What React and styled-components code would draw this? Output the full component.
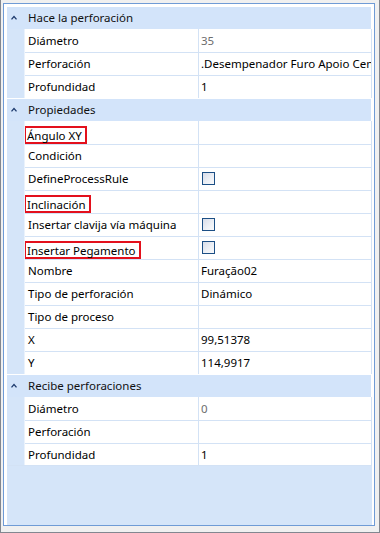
import React from "react";
import styled, { createGlobalStyle } from "styled-components";

const Global = createGlobalStyle`
  html, body { margin: 0; padding: 0; background: #f0f0f0; }
  body { font-family: "Noto Sans", "Open Sans", "Liberation Sans", sans-serif; font-size: 11.5px; }
  * { box-sizing: border-box; }
`;

const Window = styled.div`
  width: 380px;
  height: 533px;
  background: #f0f0f0;
  border-left: 1px solid #828790;
  border-right: 1px solid #828790;
  border-bottom: 1px solid #828790;
  padding: 3px 4px 6px 2px;
  display: flex;
`;

const Panel = styled.div`
  flex: 1;
  border: 1px solid #6f9bd6;
  background: #d5e5f9;
  display: flex;
`;

const Inner = styled.div`
  flex: 1;
  border-left: 3px solid #ffffff;
  border-top: 2px solid #ffffff;
  border-right: 2px solid #ffffff;
  display: flex;
  flex-direction: column;
`;

const Header = styled.div`
  height: 23px;
  display: flex;
  align-items: center;
  border-top: 1px solid #ffffff;
  border-right: 1px solid #ffffff;
  background: #d3e4fa;
  padding: 0 0 1px 4px;
  color: #111;
`;

const Caret = styled.svg`
  width: 6px;
  height: 5px;
  margin-right: 11px;
  flex: none;
`;

const Row = styled.div`
  height: 23px;
  display: grid;
  grid-template-columns: 17px 1px 173px 1px 172px 1px;
  border-bottom: ${(p) => (p.$last ? "1px solid #d3e2f5" : "0")};
`;

const Gutter = styled.div`
  background: #d5e5f9;
`;

const VLine = styled.div`
  background: ${(p) => p.$c || "#d3e2f5"};
`;

const Cell = styled.div`
  background: #ffffff;
  border-top: 1px solid ${(p) => (p.$first ? "#ffffff" : "#d3e2f5")};
  display: flex;
  align-items: center;
  padding: 0 0 1px ${(p) => p.$pad}px;
  overflow: hidden;
  white-space: nowrap;
  color: ${(p) => (p.$muted ? "#6d6d6d" : "#000")};
`;

const Label = styled.span`
  display: inline-block;
  ${(p) =>
    p.$hl
      ? `border: 2px solid #e3101c; padding: 0 3px 0 1px; margin-left: -4px; margin-top: 4px; margin-bottom: -1px; line-height: 15px; align-self: stretch; display: flex; align-items: center;`
      : ``}
`;

const Check = styled.span`
  width: 13px;
  height: 13px;
  margin-left: 1px;
  border: 1px solid #1c4f85;
  background: linear-gradient(135deg, #d8dde9 0%, #eef1f6 60%, #f8f9fb 100%);
`;

const Spacer = styled.div`
  flex: 1;
`;

const sections = [
  {
    title: "Hace la perforación",
    rows: [
      { n: "Diámetro", v: "35", muted: true },
      { n: "Perforación", v: ".Desempenador Furo Apoio Central" },
      { n: "Profundidad", v: "1" },
    ],
  },
  {
    title: "Propiedades",
    rows: [
      { n: "Ángulo XY", v: "", hl: true },
      { n: "Condición", v: "" },
      { n: "DefineProcessRule", check: true },
      { n: "Inclinación", v: "", hl: true },
      { n: "Insertar clavija vía máquina", check: true },
      { n: "Insertar Pegamento", check: true, hl: true },
      { n: "Nombre", v: "Furação02" },
      { n: "Tipo de perforación", v: "Dinámico" },
      { n: "Tipo de proceso", v: "" },
      { n: "X", v: "99,51378" },
      { n: "Y", v: "114,9917" },
    ],
  },
  {
    title: "Recibe perforaciones",
    rows: [
      { n: "Diámetro", v: "0", muted: true },
      { n: "Perforación", v: "" },
      { n: "Profundidad", v: "1" },
    ],
  },
];

export default function App() {
  return (
    <>
      <Global />
      <Window>
        <Panel>
          <Inner>
            {sections.map((s, si) => (
              <React.Fragment key={s.title}>
                <Header>
                  <Caret viewBox="0 0 6 5">
                    <path d="M0 4 L3 0.6 L6 4 L5 4.8 L3 2.6 L1 4.8 Z" fill="#1e3b6e" />
                  </Caret>
                  {s.title}
                </Header>
                {s.rows.map((r, ri) => (
                  <Row key={r.n} $last={si === sections.length - 1 && ri === s.rows.length - 1}>
                    <Gutter />
                    <VLine $c="#eaf2fc" />
                    <Cell $pad={3} $first={ri === 0}>
                      <Label $hl={r.hl}>{r.n}</Label>
                    </Cell>
                    <VLine />
                    <Cell $pad={2} $first={ri === 0} $muted={r.muted}>
                      {r.check ? <Check /> : r.v}
                    </Cell>
                    <VLine />
                  </Row>
                ))}
              </React.Fragment>
            ))}
            <Spacer />
          </Inner>
        </Panel>
      </Window>
    </>
  );
}
